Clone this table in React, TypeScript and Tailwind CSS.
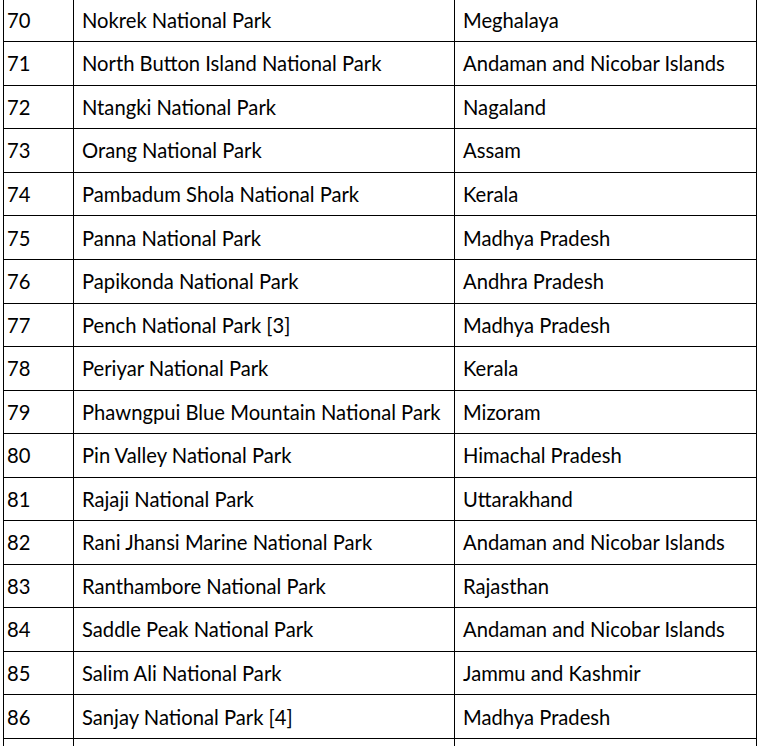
import React from "react";

const rows: [string, string, string][] = [
  ["70", "Nokrek National Park", "Meghalaya"],
  ["71", "North Button Island National Park", "Andaman and Nicobar Islands"],
  ["72", "Ntangki National Park", "Nagaland"],
  ["73", "Orang National Park", "Assam"],
  ["74", "Pambadum Shola National Park", "Kerala"],
  ["75", "Panna National Park", "Madhya Pradesh"],
  ["76", "Papikonda National Park", "Andhra Pradesh"],
  ["77", "Pench National Park [3]", "Madhya Pradesh"],
  ["78", "Periyar National Park", "Kerala"],
  ["79", "Phawngpui Blue Mountain National Park", "Mizoram"],
  ["80", "Pin Valley National Park", "Himachal Pradesh"],
  ["81", "Rajaji National Park", "Uttarakhand"],
  ["82", "Rani Jhansi Marine National Park", "Andaman and Nicobar Islands"],
  ["83", "Ranthambore National Park", "Rajasthan"],
  ["84", "Saddle Peak National Park", "Andaman and Nicobar Islands"],
  ["85", "Salim Ali National Park", "Jammu and Kashmir"],
  ["86", "Sanjay National Park [4]", "Madhya Pradesh"],
  ["", "", ""],
];

export default function App() {
  return (
    <div className="h-[746px] w-[760px] overflow-hidden bg-white">
      <div
        className="ml-[3px] mt-[-2.3px] w-[754px] border-t border-l border-black text-[20.2px] text-black"
        style={{ fontFamily: "Lato, 'Liberation Sans', sans-serif" }}
      >
        {rows.map(([n, name, state], i) => (
          <div
            key={i}
            className="grid h-[43.56px] grid-cols-[70px_381px_302px] border-b border-black"
          >
            <div className="flex items-center border-r border-black pl-[3px]">{n}</div>
            <div className="flex items-center border-r border-black pl-[8px] whitespace-nowrap">{name}</div>
            <div className="flex items-center border-r border-black pl-[8px] whitespace-nowrap">{state}</div>
          </div>
        ))}
      </div>
    </div>
  );
}
